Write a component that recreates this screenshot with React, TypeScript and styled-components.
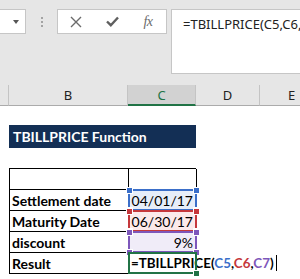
import React from 'react';
import styled, { createGlobalStyle } from 'styled-components';

const GlobalStyle = createGlobalStyle`
    html, body {
        margin: 0;
        padding: 0;
        background: #ffffff;
    }
    * {
        box-sizing: border-box;
    }
`;

const CELL_FONT = `Lato, "Liberation Sans", sans-serif`;
const UI_FONT = `"Noto Sans", "Open Sans", sans-serif`;

type RangeColor = 'blue' | 'red' | 'purple' | 'green';

const palette: Record<RangeColor, { line: string; fill: string }> = {
    blue: { line: '#3b6fc9', fill: '#e7eef9' },
    red: { line: '#c5383c', fill: '#fbeaea' },
    purple: { line: '#7d57bb', fill: '#f0ecf8' },
    green: { line: '#217346', fill: '#ffffff' },
};

const rows = [
    { label: 'Settlement date', value: '04/01/17', color: 'blue' as RangeColor },
    { label: 'Maturity Date', value: '06/30/17', color: 'red' as RangeColor },
    { label: 'discount', value: '9%', color: 'purple' as RangeColor },
];

// excel formula bar + sheet snippet
function App() {
    return (
        <>
            <GlobalStyle />
            <Frame>
                <Toolbar>
                    <NameBox>
                        <Arrow />
                    </NameBox>
                    <Grip>
                        <Dot />
                        <Dot />
                        <Dot />
                    </Grip>
                    <ButtonBox>
                        <IconSlot>
                            <svg width="12" height="12" viewBox="0 0 12 12">
                                <path d="M1 1 L11 11 M11 1 L1 11" stroke="#6b6b6b" strokeWidth="1.4" fill="none" />
                            </svg>
                        </IconSlot>
                        <IconSlot>
                            <svg width="13" height="11" viewBox="0 0 13 11">
                                <path d="M1 5.5 L4.8 9.2 L12 1.5" stroke="#5f5f5f" strokeWidth="2.4" fill="none" />
                            </svg>
                        </IconSlot>
                        <IconSlot>
                            <Fx>fx</Fx>
                        </IconSlot>
                    </ButtonBox>
                    <FormulaBox>
                        <FormulaLine>=TBILLPRICE(C5,C6,C7)</FormulaLine>
                    </FormulaBox>
                </Toolbar>

                <HeaderRow>
                    <ColHead />
                    <ColHead>B</ColHead>
                    <ColHead active>C</ColHead>
                    <ColHead>D</ColHead>
                    <ColHead>E</ColHead>
                </HeaderRow>

                <Sheet>
                    <Title>TBILLPRICE Function</Title>
                    <Table>
                        <LabelCell />
                        <ValueCell />
                        {rows.map((row) => (
                            <React.Fragment key={row.label}>
                                <LabelCell>{row.label}</LabelCell>
                                <ValueCell fill={palette[row.color].fill}>
                                    {row.value}
                                    <RangeBox color={palette[row.color].line}>
                                        <Handle color={palette[row.color].line} pos="tl" />
                                        <Handle color={palette[row.color].line} pos="tr" />
                                        <Handle color={palette[row.color].line} pos="bl" />
                                        <Handle color={palette[row.color].line} pos="br" />
                                    </RangeBox>
                                </ValueCell>
                            </React.Fragment>
                        ))}
                        <LabelCell>Result</LabelCell>
                        <ResultCell>
                            <FormulaText>
                                =TBILLPRICE(
                                <Ref color={palette.blue.line}>C5</Ref>,
                                <Ref color={palette.red.line}>C6</Ref>,
                                <Ref color={palette.purple.line}>C7</Ref>)
                            </FormulaText>
                            <Caret />
                            <RangeBox color={palette.green.line}>
                                <Handle color={palette.green.line} pos="br" />
                            </RangeBox>
                        </ResultCell>
                    </Table>
                </Sheet>
            </Frame>
        </>
    );
}

const Frame = styled.div`
    width: 300px;
    height: 279px;
    overflow: hidden;
    background: #ffffff;
`;

const Toolbar = styled.div`
    height: 85px;
    background: #e6e6e6;
    display: flex;
    align-items: flex-start;
    padding-top: 9px;
`;

const NameBox = styled.div`
    width: 26px;
    height: 25px;
    background: #ffffff;
    border: 1px solid #c6c6c6;
    border-left: none;
    display: flex;
    align-items: center;
    justify-content: flex-end;
    padding-right: 6px;
`;

const Arrow = styled.div`
    width: 0;
    height: 0;
    border-left: 3.5px solid transparent;
    border-right: 3.5px solid transparent;
    border-top: 4px solid #555555;
`;

const Grip = styled.div`
    width: 31px;
    height: 25px;
    display: flex;
    flex-direction: column;
    align-items: center;
    justify-content: center;
    gap: 2px;
`;

const Dot = styled.span`
    width: 2px;
    height: 2px;
    background: #a3a3a3;
`;

const ButtonBox = styled.div`
    width: 110px;
    height: 25px;
    background: #ffffff;
    border: 1px solid #c6c6c6;
    display: flex;
    align-items: center;
`;

const IconSlot = styled.div`
    width: 36px;
    height: 100%;
    display: flex;
    align-items: center;
    justify-content: center;
`;

const Fx = styled.span`
    font-family: "Liberation Serif", serif;
    font-style: italic;
    font-size: 14px;
    color: #6b6b6b;
    letter-spacing: -0.5px;
`;

const FormulaBox = styled.div`
    flex: 1;
    min-width: 0;
    margin-left: 4px;
    height: 65px;
    background: #ffffff;
    border: 1px solid #c6c6c6;
    border-right: none;
    padding: 5px 0 0 11px;
    overflow: hidden;
`;

const FormulaLine = styled.div`
    font-family: ${UI_FONT};
    font-size: 13px;
    line-height: 18px;
    color: #222222;
    white-space: nowrap;
`;

const HeaderRow = styled.div`
    display: grid;
    grid-template-columns: 9px 119px 68px 64px 64px;
    height: 20px;
    background: #e6e6e6;
`;

const ColHead = styled.div<{ active?: boolean }>`
    display: flex;
    align-items: center;
    justify-content: center;
    font-family: ${UI_FONT};
    font-size: 13px;
    color: ${(p) => (p.active ? '#217346' : '#222222')};
    background: ${(p) => (p.active ? '#d2d2d2' : '#e6e6e6')};
    border-right: 1px solid #c4c4c4;
    border-bottom: ${(p) => (p.active ? '2px solid #217346' : '1px solid #ababab')};
    padding-top: ${(p) => (p.active ? '1px' : '0')};
`;

const Sheet = styled.div`
    padding: 20px 0 0 9px;
`;

const Title = styled.div`
    width: 187px;
    height: 23px;
    background: #132f55;
    color: #ffffff;
    font-family: ${CELL_FONT};
    font-weight: bold;
    font-size: 14px;
    display: flex;
    align-items: center;
    padding-left: 4px;
`;

const Table = styled.div`
    margin-top: 20px;
    display: grid;
    grid-template-columns: 119px 68px;
    grid-auto-rows: 21px;
    border-top: 1px solid #000000;
    border-left: 1px solid #000000;
    width: 187px;
`;

const LabelCell = styled.div`
    border-right: 1px solid #000000;
    border-bottom: 1px solid #000000;
    font-family: ${CELL_FONT};
    font-weight: bold;
    font-size: 14px;
    color: #000000;
    display: flex;
    align-items: center;
    padding-left: 2px;
    white-space: nowrap;
`;

const ValueCell = styled.div<{ fill?: string }>`
    position: relative;
    border-right: 1px solid #000000;
    border-bottom: 1px solid #000000;
    background: ${(p) => p.fill || '#ffffff'};
    font-family: ${CELL_FONT};
    font-size: 14px;
    color: #000000;
    display: flex;
    align-items: center;
    justify-content: flex-end;
    padding-right: 3px;
`;

const ResultCell = styled(ValueCell)`
    justify-content: flex-start;
    padding-left: 2px;
    font-weight: bold;
    font-size: 13.4px;
    white-space: nowrap;
`;

const FormulaText = styled.span`
    white-space: nowrap;
`;

const Ref = styled.span<{ color: string }>`
    color: ${(p) => p.color};
`;

const Caret = styled.span`
    flex: none;
    width: 1px;
    height: 16px;
    margin-left: 2px;
    background: #000000;
`;

const RangeBox = styled.div<{ color: string }>`
    position: absolute;
    top: -1px;
    left: -1px;
    right: -1px;
    bottom: -1px;
    border: 2px solid ${(p) => p.color};
    pointer-events: none;
`;

const Handle = styled.span<{ color: string; pos: 'tl' | 'tr' | 'bl' | 'br' }>`
    position: absolute;
    width: 5px;
    height: 5px;
    background: ${(p) => p.color};
    border: 1px solid #ffffff;
    box-sizing: content-box;
    ${(p) => (p.pos[0] === 't' ? 'top: -4.5px;' : 'bottom: -4.5px;')}
    ${(p) => (p.pos[1] === 'l' ? 'left: -4.5px;' : 'right: -4.5px;')}
`;

export default App;
